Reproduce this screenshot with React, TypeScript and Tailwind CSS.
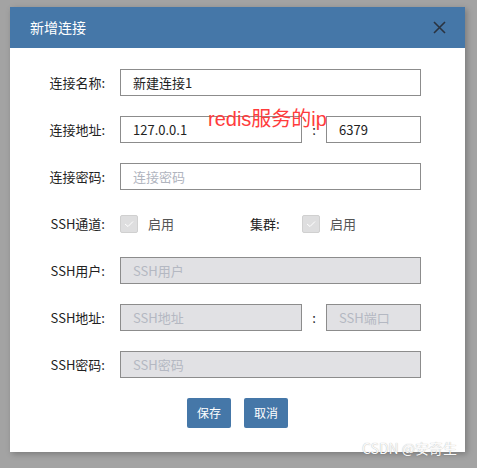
const font = { fontFamily: '"Noto Sans CJK SC", "Noto Sans", sans-serif' }

function Field({ value, placeholder, disabled, className = '' }: any) {
  return (
    <div
      className={`h-[27px] border border-[#8c8c8c] flex items-center px-[12px] text-[13px] ${
        disabled ? 'bg-[#e1e1e4] text-[#b4b8c2]' : 'bg-white'
      } ${value ? 'text-[#222]' : 'text-[#b0b4be]'} ${className}`}
    >
      {value || placeholder}
    </div>
  )
}

function Row({ label, children }: any) {
  return (
    <div className="flex items-center h-[27px]">
      <div className="w-[96px] pr-[1px] text-right text-[13px] text-[#222]">{label}</div>
      <div className="ml-[14px] flex-1 flex items-center">{children}</div>
    </div>
  )
}

function Check() {
  return (
    <div className="w-[18px] h-[18px] rounded-[2px] border border-[#d0d0d0] bg-[#dededf] flex items-center justify-center">
      <svg width="10" height="8" viewBox="0 0 10 8">
        <path d="M1 4 L4 6.5 L9 1.5" fill="none" stroke="#fff" strokeWidth="1" />
      </svg>
    </div>
  )
}

export default function App() {
  return (
    <div className="relative w-[477px] h-[468px] overflow-hidden bg-[#a3a3a3] pt-[7px] pl-[10px]" style={font}>
      <div className="w-[455px] h-[445px] bg-white shadow-[2px_2px_6px_rgba(0,0,0,0.25)] flex flex-col">
        <div className="h-[41px] bg-[#4577a8] flex items-center justify-between pl-[20px] pr-[19px]">
          <span className="text-white text-[14px]">新增连接</span>
          <svg width="13" height="13" viewBox="0 0 13 13">
            <path d="M1 1 L12 12 M12 1 L1 12" stroke="#2a3340" strokeWidth="1.6" />
          </svg>
        </div>
        <div className="pt-[21px] pr-[44px] flex flex-col gap-[20px]">
          <Row label="连接名称:">
            <Field value="新建连接1" className="flex-1" />
          </Row>
          <Row label="连接地址:">
            <Field value="127.0.0.1" className="w-[182px]" />
            <span className="w-[24px] text-center text-[13px] text-[#222]">:</span>
            <Field value="6379" className="flex-1" />
          </Row>
          <Row label="连接密码:">
            <Field placeholder="连接密码" className="flex-1" />
          </Row>
          <Row label="SSH通道:">
            <Check />
            <span className="ml-[10px] text-[13px] text-[#555]">启用</span>
            <span className="ml-[76px] w-[52px] text-[13px] text-[#222]">集群:</span>
            <Check />
            <span className="ml-[10px] text-[13px] text-[#555]">启用</span>
          </Row>
          <Row label="SSH用户:">
            <Field disabled placeholder="SSH用户" className="flex-1" />
          </Row>
          <Row label="SSH地址:">
            <Field disabled placeholder="SSH地址" className="w-[182px]" />
            <span className="w-[24px] text-center text-[13px] text-[#222]">:</span>
            <Field disabled placeholder="SSH端口" className="flex-1" />
          </Row>
          <Row label="SSH密码:">
            <Field disabled placeholder="SSH密码" className="flex-1" />
          </Row>
        </div>
        <div className="mt-[20px] flex justify-center gap-[13px]">
          <button className="w-[44px] h-[30px] rounded-[2px] bg-[#4577a8] text-white text-[12px]">保存</button>
          <button className="w-[44px] h-[30px] rounded-[2px] bg-[#4577a8] text-white text-[12px]">取消</button>
        </div>
      </div>
      <div
        className="absolute left-[208px] top-[107px] text-[20px] leading-[24px] text-[#ff3c3c]"
        style={{ fontFamily: '"Liberation Sans", "Noto Sans CJK SC", sans-serif' }}
      >
        redis服务的ip
      </div>
      <div className="absolute left-[362px] top-[438px] text-[14px] leading-[20px] text-[#fafafa] [text-shadow:0_0_1px_rgba(0,0,0,0.35)]">
        CSDN @安奇生
      </div>
    </div>
  )
}
